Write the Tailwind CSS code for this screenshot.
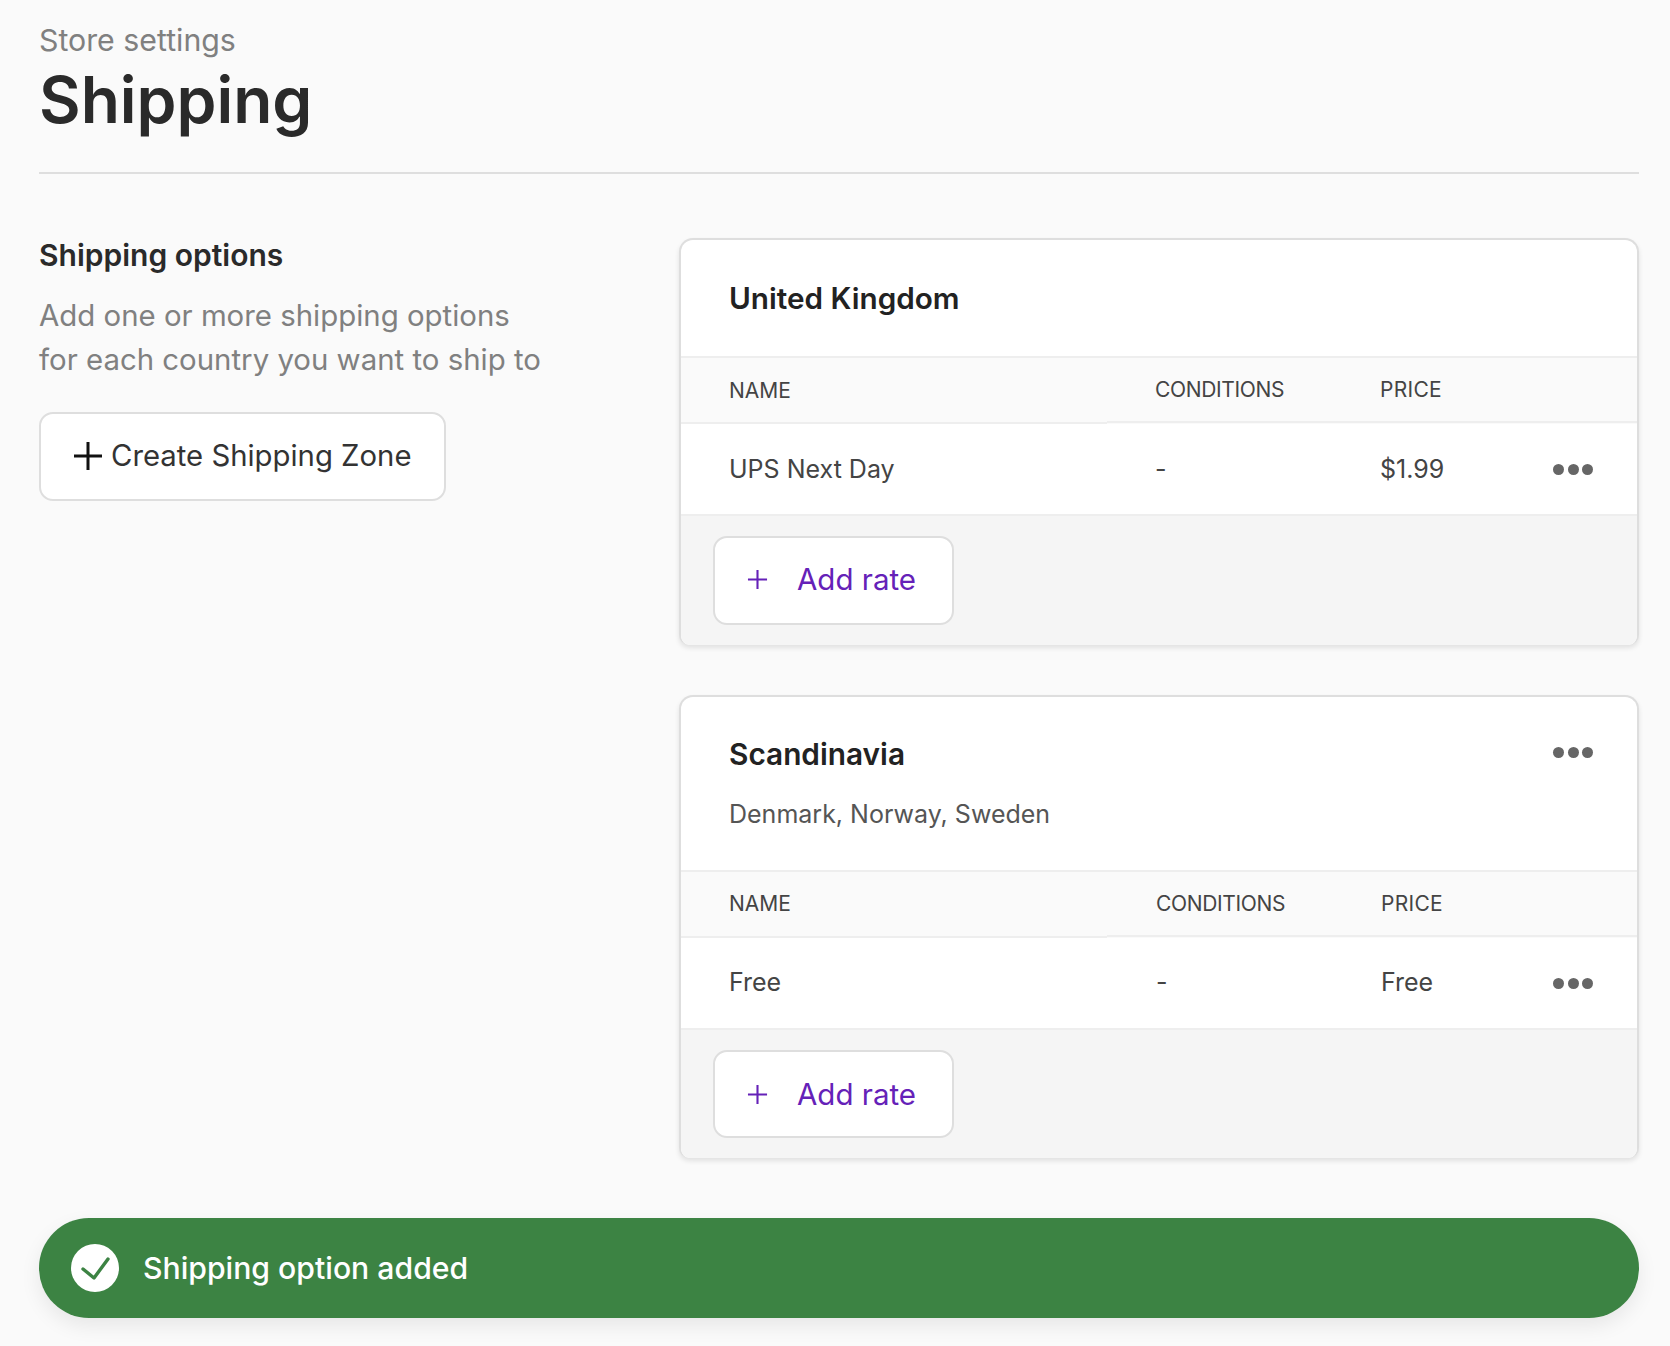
<!DOCTYPE html>
<html lang="en">
<head>
    <meta charset="UTF-8">
    <title>Shipping</title>
    <script src="https://cdn.jsdelivr.net/npm/@tailwindcss/browser@4"></script>
</head>
<body class="bg-[#fafafa] text-[#2a2a2a] font-['Inter',sans-serif] h-[1346px] overflow-hidden">

<div class="pl-[39px] pr-[31px]">
    <header class="h-[174px] pt-[20px] border-b-2 border-[#dedede]">
        <p class="text-[30.3px] leading-[40px] text-[#808080]">Store settings</p>
        <h1 class="mt-[3px] text-[64px] leading-[73px] font-semibold">Shipping</h1>
    </header>

    <div class="flex">
        <section class="w-[640px] shrink-0 pt-[61px]">
            <h2 class="text-[30px] leading-[40px] font-semibold">Shipping options</h2>
            <p class="mt-[19px] text-[29.4px] leading-[44px] text-[#808080]">Add one or more shipping options<br>for each country you want to ship to</p>
            <button class="mt-[30px] w-[407px] h-[89px] pb-[1px] flex items-center pl-[32px] gap-[8px] bg-white border-2 border-[#dedede] rounded-[14px] text-[29.3px] text-[#333]">
                <svg class="w-[30px] h-[30px]" viewBox="0 0 30 30" fill="none" stroke="#111" stroke-width="3"><path d="M1 15h28M15 1v28"/></svg>
                Create Shipping Zone
            </button>
        </section>

        <main class="w-[960px] shrink-0 pt-[64px]">
            <article class="bg-white border-x-2 border-t-2 border-[#dedede] rounded-t-[14px] rounded-b-[10px] shadow-[0_3px_5px_rgba(0,0,0,0.1)] overflow-hidden">
                <div class="h-[118px] px-[48px] flex items-center border-b-2 border-[#eeeeee]">
                    <h3 class="text-[29.7px] font-semibold text-[#222]">United Kingdom</h3>
                </div>
                <div class="flex h-[66px] bg-[#fafafa] text-[21px] text-[#444]">
                    <div class="w-[426px] pl-[48px] pt-[1px] flex items-center border-b-2 border-[#eeeeee]">NAME</div>
                    <div class="flex-1 mb-[1px] pt-[1px] flex items-center border-b-2 border-[#eeeeee]">
                        <span class="w-[273px] pl-[48px] tracking-[-0.35px]">CONDITIONS</span>
                        <span class="tracking-[0.3px]">PRICE</span>
                    </div>
                </div>
                <div class="flex items-center h-[92px] pt-[1px] border-b-2 border-[#eeeeee] text-[25px] text-[#444]">
                    <span class="w-[474px] pl-[48px]">UPS Next Day</span>
                    <span class="w-[225px]">-</span>
                    <span class="flex-1">$1.99</span>
                    <span class="flex gap-[3.5px] mr-[44px]"><i class="w-[11px] h-[11px] rounded-full bg-[#666]"></i><i class="w-[11px] h-[11px] rounded-full bg-[#666]"></i><i class="w-[11px] h-[11px] rounded-full bg-[#666]"></i></span>
                </div>
                <div class="h-[129px] bg-[#f5f5f5] pl-[32px] pt-[20px]">
                    <button class="w-[241px] h-[89px] pb-[2px] flex items-center pl-[32px] gap-[29px] bg-white border-2 border-[#dedede] rounded-[14px] text-[29.5px] text-[#6521b8]">
                        <svg class="w-[21px] h-[21px]" viewBox="0 0 22 22" fill="none" stroke="currentColor" stroke-width="2.2"><path d="M1 11h20M11 1v20"/></svg>
                        Add rate
                    </button>
                </div>
            </article>

            <article class="mt-[50px] bg-white border-x-2 border-t-2 border-[#dedede] rounded-t-[14px] rounded-b-[10px] shadow-[0_3px_5px_rgba(0,0,0,0.1)] overflow-hidden">
                <div class="h-[175px] px-[48px] pt-[37px] border-b-2 border-[#eeeeee] relative">
                    <h3 class="text-[29.8px] leading-[40px] font-semibold text-[#222]">Scandinavia</h3>
                    <p class="mt-[20px] text-[25px] leading-[40px] text-[#555]">Denmark, Norway, Sweden</p>
                    <span class="absolute top-[50px] right-[44px] flex gap-[3.5px]"><i class="w-[11px] h-[11px] rounded-full bg-[#666]"></i><i class="w-[11px] h-[11px] rounded-full bg-[#666]"></i><i class="w-[11px] h-[11px] rounded-full bg-[#666]"></i></span>
                </div>
                <div class="flex h-[66px] bg-[#fafafa] text-[21px] text-[#444]">
                    <div class="w-[426px] pl-[48px] flex items-center border-b-2 border-[#eeeeee]">NAME</div>
                    <div class="flex-1 mb-[1px] pt-[1px] flex items-center border-b-2 border-[#eeeeee]">
                        <span class="w-[274px] pl-[49px] tracking-[-0.35px]">CONDITIONS</span>
                        <span class="tracking-[0.3px]">PRICE</span>
                    </div>
                </div>
                <div class="flex items-center h-[92px] border-b-2 border-[#eeeeee] text-[25px] text-[#444]">
                    <span class="w-[475px] pl-[48px]">Free</span>
                    <span class="w-[225px]">-</span>
                    <span class="flex-1">Free</span>
                    <span class="flex gap-[3.5px] mr-[44px]"><i class="w-[11px] h-[11px] rounded-full bg-[#666]"></i><i class="w-[11px] h-[11px] rounded-full bg-[#666]"></i><i class="w-[11px] h-[11px] rounded-full bg-[#666]"></i></span>
                </div>
                <div class="h-[128px] bg-[#f5f5f5] pl-[32px] pt-[20px]">
                    <button class="w-[241px] h-[88px] flex items-center pl-[32px] gap-[29px] bg-white border-2 border-[#dedede] rounded-[14px] text-[29.5px] text-[#6521b8]">
                        <svg class="w-[21px] h-[21px]" viewBox="0 0 22 22" fill="none" stroke="currentColor" stroke-width="2.2"><path d="M1 11h20M11 1v20"/></svg>
                        Add rate
                    </button>
                </div>
            </article>
        </main>
    </div>

    <div class="mt-[60px] h-[100px] bg-[#3c8343] rounded-full flex items-center pl-[32px] gap-[24px] shadow-[0_8px_20px_rgba(0,0,0,0.08)]">
        <span class="w-[48px] h-[48px] rounded-full bg-white flex items-center justify-center">
            <svg class="w-[30px] h-[30px]" viewBox="0 0 30 30" fill="none" stroke="#3c8343" stroke-width="3.4" stroke-linecap="round" stroke-linejoin="round"><path d="M3 16l11 9L28 6"/></svg>
        </span>
        <span class="pt-[1px] text-[30.2px] font-medium text-white">Shipping option added</span>
    </div>
</div>

</body>
</html>
